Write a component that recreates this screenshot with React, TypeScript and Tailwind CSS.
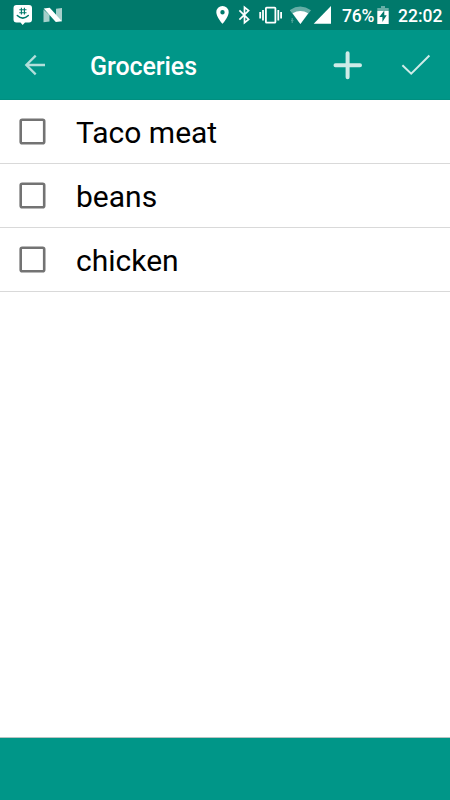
import React from "react";

const items = ["Taco meat", "beans", "chicken"];

function StatusBar() {
  return (
    <header className="flex h-[30px] shrink-0 items-center bg-[#00796b] text-white">
      <svg className="ml-[13px] h-[30px] w-[20px] shrink-0" viewBox="13 0 20 30">
        <path fill="#fff" d="M16.500 5h12.500q3 0 3 3v11.500q0 3-3 3h-4l-2.300 2.500-2.200-2.500h-4q-3 0-3-3V8q0-3 3-3z" />
        <path fill="none" stroke="#00796b" strokeWidth="1.100" d="M21.400 7.800v6.700M24.400 7.800v6.700M19.300 9.700h7.200M19.300 12.700h7.200" />
        <path fill="none" stroke="#00796b" strokeWidth="1.500" strokeLinecap="round" d="M17.300 15.500q5.500 5.300 11 0" />
      </svg>
      <svg className="ml-[10px] h-[30px] w-[20px] shrink-0" viewBox="43 0 20 30">
        <path fill="#fff" fillOpacity="0.65" d="M43.500 9.500l6 5.500v6.500l-6 .8zM62 8v13.500l-6-6V8.800z" />
        <path fill="#fff" d="M43.700 8.500l6-.7L62 21.200l-6.200.9z" />
      </svg>
      <svg className="ml-[153px] h-[30px] w-[14px] shrink-0" viewBox="216 0 14 30">
        <path fill="#fff" fillRule="evenodd" d="M222.500 6a6.200 6.200 0 0 0-6.200 6.200c0 4.700 6.200 11.600 6.200 11.600s6.200-6.900 6.200-11.600a6.200 6.200 0 0 0-6.200-6.200zm0 4a2.200 2.200 0 1 1 0 4.400 2.200 2.200 0 0 1 0-4.400z" />
      </svg>
      <svg className="ml-[8px] h-[30px] w-[14px] shrink-0" viewBox="238 0 14 30">
        <path fill="none" stroke="#fff" strokeWidth="1.700" d="M239.400 10.300l9.200 9.200-4.100 3.200V7.300l4.100 3.200-9.200 9.200" />
      </svg>
      <svg className="ml-[7px] h-[30px] w-[24px] shrink-0" viewBox="259 0 24 30">
        <path fill="none" stroke="#fff" strokeWidth="1.800" d="M260.200 12v6.500M263 10v10.500M278.300 10v10.500M281.100 12v6.500" />
        <rect x="265.900" y="7.600" width="9.500" height="15" rx=".7" fill="none" stroke="#fff" strokeWidth="1.800" />
      </svg>
      <svg className="ml-[7px] h-[30px] w-[22px] shrink-0" viewBox="290 0 22 30">
        <path fill="#fff" fillOpacity="0.4" d="M289.800 10.200q10.600-7.200 21.200 0L300.400 24z" />
        <path fill="#fff" d="M292.600 13.200q7.800-4.600 15.600 0L300.400 24z" />
        <path fill="none" stroke="#fff" strokeOpacity="0.300" strokeWidth="1.200" d="M292.200 18v5M291 20.500h2.500" />
      </svg>
      <svg className="ml-[1px] h-[30px] w-[20px] shrink-0" viewBox="313 0 20 30">
        <path fill="#fff" d="M331 6v17.700h-17.300z" />
      </svg>
      <span className="ml-[9px] w-[34px] shrink-0 whitespace-nowrap pt-[2px] text-[17.500px] font-medium leading-[30px] tracking-[-0.200px]">76%</span>
      <svg className="ml-[1px] h-[30px] w-[12px] shrink-0" viewBox="377 0 12 30">
        <path fill="#fff" fillOpacity="0.4" d="M381 6h4v2h3.700v3H377.300V8h3.700z" />
        <path fill="#fff" d="M377.300 11h11.400v13h-11.400z" />
        <path fill="#00796b" d="M384.300 10.500l-5 6.500h3.100v5l4.300-6.800h-2.400z" />
      </svg>
      <span className="ml-[9px] shrink-0 whitespace-nowrap pt-[2px] text-[17.500px] font-medium leading-[30px]">22:02</span>
    </header>
  );
}

export default function App() {
  return (
    <div className="flex h-[800px] w-[450px] flex-col overflow-hidden bg-white font-['Roboto',sans-serif]">
      <StatusBar />
      <nav className="flex h-[70px] shrink-0 items-center border-b border-[#008f80] bg-[#009688] text-white">
        <button aria-label="Back" className="ml-[24px] h-[24px] w-[22px] shrink-0">
          <svg className="h-[24px] w-[22px]" viewBox="24 53 22 24">
            <path fill="none" stroke="#b2dfdb" strokeWidth="2.300" d="M45 65H26.700M35.700 55.600L26.300 65l9.400 9.400" />
          </svg>
        </button>
        <h1 className="ml-[44px] w-[243px] pt-[4px] text-[25px] font-medium leading-[30px] tracking-[-0.080px]">Groceries</h1>
        <button aria-label="Add" className="h-[30px] w-[30px] shrink-0">
          <svg className="h-[30px] w-[30px]" viewBox="333 50 30 30">
            <path fill="none" stroke="#cfebe8" strokeWidth="4" strokeLinecap="round" d="M347.600 53.200v24M335.500 65.200h24.500" />
          </svg>
        </button>
        <button aria-label="Done" className="ml-[38px] h-[24px] w-[30px] shrink-0">
          <svg className="h-[24px] w-[30px]" viewBox="401 53 30 24">
            <path fill="none" stroke="#cfebe8" strokeWidth="2" d="M402.400 65.200l8.800 8.500 18.200-18.200" />
          </svg>
        </button>
      </nav>
      <main className="flex-1 border-b border-[#b8c4c2]">
        <ul>
          {items.map((item) => (
            <li key={item} className="flex h-[64px] items-center border-b border-[#d9d9d9]">
              <svg role="checkbox" aria-checked="false" className="ml-[19px] h-[27px] w-[27px] shrink-0" viewBox="0 0 27 27">
                <rect x="1.700" y="1.700" width="23.500" height="23.500" rx="1.500" fill="none" stroke="#737373" strokeWidth="2.600" />
              </svg>
              <span className="ml-[30px] pt-[2px] text-[30px] leading-[36px] text-black">{item}</span>
            </li>
          ))}
        </ul>
      </main>
      <footer className="h-[62px] shrink-0 bg-[#009688]" />
    </div>
  );
}
